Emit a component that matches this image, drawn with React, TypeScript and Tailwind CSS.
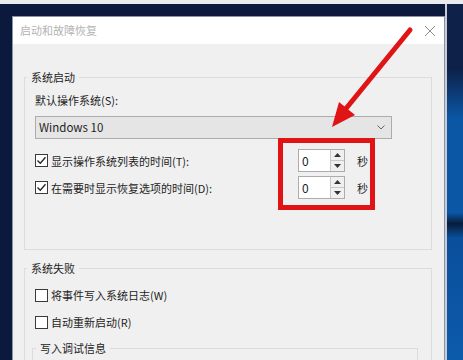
import React from "react";

const font = { fontFamily: '"Noto Sans CJK SC", "Noto Sans", sans-serif' };

function CheckBox({ checked }: { checked?: boolean }) {
  return (
    <span className="flex h-[13px] w-[13px] shrink-0 items-center justify-center border border-[#3a3a3a] bg-white">
      {checked && (
        <svg width="11" height="11" viewBox="0 0 11 11">
          <path d="M1.5 5.5 L4.3 8.3 L9.5 2.3" fill="none" stroke="#222" strokeWidth="1.3" />
        </svg>
      )}
    </span>
  );
}

function CheckRow({ label, checked }: { label: string; checked?: boolean }) {
  return (
    <div className="flex items-center gap-[3px] text-[11px] leading-[16px] text-[#1e1e1e]">
      <CheckBox checked={checked} />
      <span>{label}</span>
    </div>
  );
}

function SpinBox() {
  return (
    <div className="flex h-[23px] w-[47px] border border-[#acacac] bg-white">
      <div className="flex-1 pl-[3px] text-[12px] leading-[21px] text-[#1e1e1e]">0</div>
      <div className="flex w-[14px] flex-col border-l border-[#c8c8c8] bg-[#f0f0f0]">
        <div className="flex flex-1 items-center justify-center border-b border-[#c8c8c8]">
          <svg width="7" height="4" viewBox="0 0 7 4">
            <path d="M0 4 L3.5 0 L7 4 Z" fill="#333" />
          </svg>
        </div>
        <div className="flex flex-1 items-center justify-center">
          <svg width="7" height="4" viewBox="0 0 7 4">
            <path d="M0 0 L3.5 4 L7 0 Z" fill="#333" />
          </svg>
        </div>
      </div>
    </div>
  );
}

function TimeRow({ label }: { label: string }) {
  return (
    <div className="flex h-[23px] items-center">
      <div className="w-[263px]">
        <CheckRow label={label} checked />
      </div>
      <SpinBox />
      <span className="ml-[12px] text-[11px] leading-[16px] text-[#1e1e1e]">秒</span>
    </div>
  );
}

export default function App() {
  return (
    <div className="relative h-[360px] w-[463px] overflow-hidden bg-[#0b1a3c]" style={font}>
      <div className="h-[4px] bg-[#e9ebef]" />
      <div className="flex">
        <div className="w-[12px] shrink-0" />
        <div className="mt-[12px] h-[400px] w-[433px] shrink-0 border border-[#8a93a3] bg-[#f0f0f0]">
          <div className="flex h-[27px] items-center justify-between bg-white pl-[7px] pr-[8px]">
            <span className="text-[11px] text-[#b4b4b4]">启动和故障恢复</span>
            <svg width="12" height="12" viewBox="0 0 12 12">
              <path d="M1 1 L11 11 M11 1 L1 11" stroke="#8c8c8c" strokeWidth="1" />
            </svg>
          </div>
          <div className="pl-[11px] pt-[25px]">
            <fieldset className="w-[408px] border border-[#dcdcdc] pb-[50px] pl-[10px]">
              <legend className="-ml-[8px] px-[4px] text-[11px] leading-[16px] text-[#1e1e1e]">系统启动</legend>
              <div className="mt-[7px] text-[11px] leading-[16px] text-[#1e1e1e]">默认操作系统(S):</div>
              <div className="mt-[8px] flex h-[23px] w-[357px] items-center justify-between border border-[#acacac] bg-[#e5e5e5] pl-[3px] pr-[6px]">
                <span className="text-[11.5px] text-[#1e1e1e]">Windows 10</span>
                <svg width="8" height="5" viewBox="0 0 8 5">
                  <path d="M0.5 0.5 L4 4 L7.5 0.5" fill="none" stroke="#666" strokeWidth="1" />
                </svg>
              </div>
              <div className="mt-[10px] flex flex-col gap-[4px]">
                <TimeRow label="显示操作系统列表的时间(T):" />
                <TimeRow label="在需要时显示恢复选项的时间(D):" />
              </div>
            </fieldset>
            <fieldset className="mt-[10px] w-[408px] border border-[#dcdcdc] pb-[30px] pl-[10px]">
              <legend className="-ml-[8px] px-[4px] text-[11px] leading-[16px] text-[#1e1e1e]">系统失败</legend>
              <div className="mt-[11px] flex flex-col gap-[11px]">
                <CheckRow label="将事件写入系统日志(W)" />
                <CheckRow label="自动重新启动(R)" />
              </div>
              <fieldset className="-ml-[3px] mt-[10px] h-[60px] w-[386px] border border-[#dcdcdc]">
                <legend className="ml-[3px] px-[4px] text-[11px] leading-[16px] text-[#1e1e1e]">写入调试信息</legend>
              </fieldset>
            </fieldset>
          </div>
        </div>
        <div className="h-[360px] flex-1 border-l-[2px] border-[#c9ccd2] bg-[linear-gradient(to_bottom,#0d2149_0%,#0d2149_18%,#0b57a6_32%,#0b57a6_58%,#061c3a_61%,#0a4f9c_65%,#0c5bab_100%)]" />
      </div>

      <div className="absolute left-[278px] top-[138px] h-[72px] w-[97px] border-[5px] border-[#e01414]" />
      <svg className="absolute left-0 top-0" width="463" height="360" viewBox="0 0 463 360">
        <line x1="410" y1="30" x2="344" y2="111" stroke="#e01414" strokeWidth="5" strokeLinecap="round" />
        <polygon points="332,127 355,115 339,102" fill="#e01414" />
      </svg>
    </div>
  );
}
